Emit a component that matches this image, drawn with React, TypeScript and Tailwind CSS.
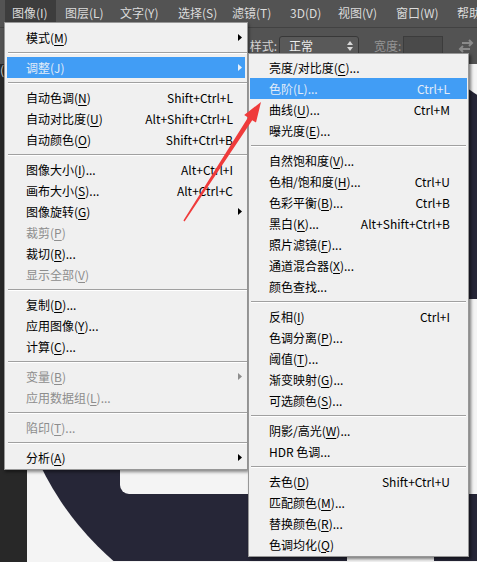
import React from 'react';

type Item =
  | 'sep'
  | { t: string; k?: string; dots?: boolean; sc?: string; arrow?: boolean; off?: boolean; hl?: boolean };

const mainItems: Item[] = [
  { t: '模式', k: 'M', arrow: true },
  'sep',
  { t: '调整', k: 'J', arrow: true, hl: true },
  'sep',
  { t: '自动色调', k: 'N', sc: 'Shift+Ctrl+L' },
  { t: '自动对比度', k: 'U', sc: 'Alt+Shift+Ctrl+L' },
  { t: '自动颜色', k: 'O', sc: 'Shift+Ctrl+B' },
  'sep',
  { t: '图像大小', k: 'I', dots: true, sc: 'Alt+Ctrl+I' },
  { t: '画布大小', k: 'S', dots: true, sc: 'Alt+Ctrl+C' },
  { t: '图像旋转', k: 'G', arrow: true },
  { t: '裁剪', k: 'P', off: true },
  { t: '裁切', k: 'R', dots: true },
  { t: '显示全部', k: 'V', off: true },
  'sep',
  { t: '复制', k: 'D', dots: true },
  { t: '应用图像', k: 'Y', dots: true },
  { t: '计算', k: 'C', dots: true },
  'sep',
  { t: '变量', k: 'B', off: true, arrow: true },
  { t: '应用数据组', k: 'L', dots: true, off: true },
  'sep',
  { t: '陷印', k: 'T', dots: true, off: true },
  'sep',
  { t: '分析', k: 'A', arrow: true },
];

const subItems: Item[] = [
  { t: '亮度/对比度', k: 'C', dots: true },
  { t: '色阶', k: 'L', dots: true, sc: 'Ctrl+L', hl: true },
  { t: '曲线', k: 'U', dots: true, sc: 'Ctrl+M' },
  { t: '曝光度', k: 'E', dots: true },
  'sep',
  { t: '自然饱和度', k: 'V', dots: true },
  { t: '色相/饱和度', k: 'H', dots: true, sc: 'Ctrl+U' },
  { t: '色彩平衡', k: 'B', dots: true, sc: 'Ctrl+B' },
  { t: '黑白', k: 'K', dots: true, sc: 'Alt+Shift+Ctrl+B' },
  { t: '照片滤镜', k: 'F', dots: true },
  { t: '通道混合器', k: 'X', dots: true },
  { t: '颜色查找', dots: true },
  'sep',
  { t: '反相', k: 'I', sc: 'Ctrl+I' },
  { t: '色调分离', k: 'P', dots: true },
  { t: '阈值', k: 'T', dots: true },
  { t: '渐变映射', k: 'G', dots: true },
  { t: '可选颜色', k: 'S', dots: true },
  'sep',
  { t: '阴影/高光', k: 'W', dots: true },
  { t: 'HDR 色调', dots: true },
  'sep',
  { t: '去色', k: 'D', sc: 'Shift+Ctrl+U' },
  { t: '匹配颜色', k: 'M', dots: true },
  { t: '替换颜色', k: 'R', dots: true },
  { t: '色调均化', k: 'Q' },
];

const menuBar = [
  { t: '图层(L)', w: 'w-[55px]' },
  { t: '文字(Y)', w: 'w-[58px]' },
  { t: '选择(S)', w: 'w-[54px]' },
  { t: '滤镜(T)', w: 'w-[58px]' },
  { t: '3D(D)', w: 'w-[48px]' },
  { t: '视图(V)', w: 'w-[58px]' },
  { t: '窗口(W)', w: 'w-[61px]' },
  { t: '帮助(H)', w: 'w-[60px]' },
];

function SubArrow({ color }: { color: string }) {
  return (
    <svg width="4" height="7" viewBox="0 0 4 7" className="absolute right-[3px] top-[7px]">
      <polygon points="0,0 4,3.5 0,7" fill={color} />
    </svg>
  );
}

function MenuList({ items, sub }: { items: Item[]; sub?: boolean }) {
  return (
    <>
      {items.map((item, i) => {
        if (item === 'sep') {
          return (
            <div key={i} className={`h-[9px] flex flex-col justify-center ${sub ? 'mx-[2px]' : 'ml-[3px]'}`}>
              <div className="h-px bg-[#a0a0a0]" />
              <div className="h-px bg-white" />
            </div>
          );
        }
        const color = item.hl ? 'text-[#e2ecf8]' : item.off ? 'text-[#8d8d8d]' : 'text-black';
        return (
          <div
            key={i}
            className={`relative h-[21px] flex items-center whitespace-nowrap ${color} ${
              sub ? 'mx-px pl-[19px] pr-[17px]' : 'mx-[2px] pl-[19px] pr-[12px]'
            } ${item.hl ? 'bg-[#419df5]' : ''}`}
          >
            <span>
              {item.t}
              {item.k && (
                <>
                  (<span className={item.hl ? '' : 'underline underline-offset-[2px]'}>{item.k}</span>)
                </>
              )}
              {item.dots && '...'}
            </span>
            {item.sc && <span className="ml-auto">{item.sc}</span>}
            {item.arrow && <SubArrow color={item.hl ? '#e8f0fa' : item.off ? '#8d8d8d' : '#000'} />}
          </div>
        );
      })}
    </>
  );
}

export default function App() {
  return (
    <div className="relative w-[477px] h-[562px] overflow-hidden bg-[#282828] text-[12px] font-['Noto_Sans_CJK_SC','Noto_Sans',sans-serif]">
      <div className="flex flex-col h-full">
        {/* menu bar */}
        <div className="h-[28px] bg-[#535353] border-b border-[#424242] flex items-start text-[#dcdcdc] shrink-0 overflow-hidden whitespace-nowrap">
          <div className="ml-[5px] w-[51px] h-[22px] shrink-0 bg-[#3d3d3d] flex items-center pt-[3px] pl-[7px]">图像(I)</div>
          <div className="w-[9px] shrink-0" />
          {menuBar.map((m) => (
            <div key={m.t} className={`${m.w} h-[22px] pt-[3px] flex items-center shrink-0`}>
              {m.t}
            </div>
          ))}
        </div>

        {/* options bar */}
        <div className="h-[36px] bg-[#535353] flex items-center text-[#d4d4d4] shrink-0 whitespace-nowrap">
          <div className="w-[277px] shrink-0 text-right">样式:</div>
          <div className="ml-[2px] w-[80px] h-[20px] shrink-0 rounded-[3px] border border-[#383838] bg-[#595959] flex items-center pl-[9px] pr-[5px]">
            <span className="text-[#ececec]">正常</span>
            <svg width="6" height="10" viewBox="0 0 6 10" className="ml-auto">
              <polygon points="3,0 6,4 0,4" fill="#d8d8d8" />
              <polygon points="0,6 6,6 3,10" fill="#d8d8d8" />
            </svg>
          </div>
          <div className="ml-[15px] text-[#959595]">宽度:</div>
          <div className="ml-[2px] w-[40px] h-[20px] shrink-0 border border-[#3c3c3c] bg-[#4a4a4a]" />
          <svg width="16" height="14" viewBox="0 0 16 14" className="ml-[15px] shrink-0">
            <path d="M4 4h10M11 1l3 3-3 3" stroke="#8a8a8a" strokeWidth="2" fill="none" />
            <path d="M12 10H2M5 7l-3 3 3 3" stroke="#8a8a8a" strokeWidth="2" fill="none" />
          </svg>
        </div>

        {/* workspace */}
        <div className="flex flex-1 min-h-0">
          <div className="w-[27px] shrink-0 bg-[#282828] text-[#cfcfcf] leading-none">(</div>
          <div className="relative flex-1 bg-[#f4f4f4] overflow-hidden">
            <svg width="450" height="497" viewBox="27 65 450 497" className="absolute inset-0">
              <circle cx="307" cy="338" r="296" fill="#262637" />
              <rect x="120" y="300" width="420" height="195" rx="9" fill="#f4f4f4" />
              <rect x="347" y="545" width="87" height="40" rx="6" fill="#f4f4f4" />
            </svg>
          </div>
        </div>
      </div>

      {/* image menu */}
      <div className="absolute left-[4px] top-[22px] w-[244px] bg-[#f0f0f0] border border-[#979797] pt-[4px] pb-px shadow-[1px_2px_3px_rgba(0,0,0,0.45)]">
        <MenuList items={mainItems} />
      </div>

      {/* adjustments submenu */}
      <div className="absolute left-[248px] top-[53px] w-[221px] bg-[#f0f0f0] border border-[#979797] pt-[3px] pb-px shadow-[2px_2px_3px_rgba(0,0,0,0.5)]">
        <MenuList items={subItems} sub />
      </div>

      {/* red pointer arrow */}
      <svg width="477" height="562" className="absolute inset-0 pointer-events-none">
        <polygon
          points="183.4,220.6 248,117.4 244.2,115 261,102 256,122.6 252.2,120.2 184.6,221.4"
          fill="#ef3b3b"
        />
      </svg>
    </div>
  );
}
